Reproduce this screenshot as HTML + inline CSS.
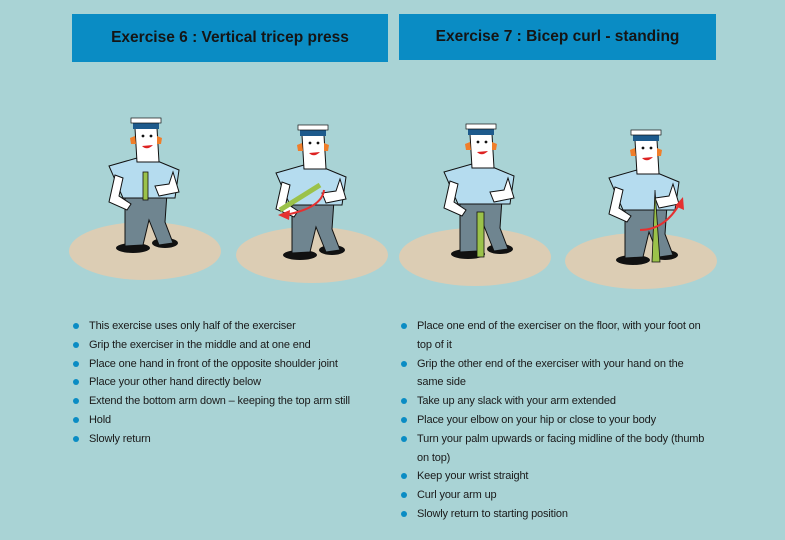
<!DOCTYPE html>
<html><head><style>
body{margin:0;width:785px;height:540px;background:#a9d3d5;position:relative;overflow:hidden;font-family:"Liberation Sans",sans-serif}
.h{position:absolute;background:#0a8cc4;color:#151515;font-weight:bold;font-size:15.5px;text-align:center;box-sizing:border-box}
ul{position:absolute;margin:0;padding:0;list-style:none;font-size:11px;color:#1a1a1a;letter-spacing:-0.15px}
li{position:relative;padding-left:16px;line-height:18.8px}
li:before{content:"";position:absolute;left:0;top:6px;width:6px;height:6px;border-radius:50%;background:#0a8cc4}
</style></head><body>
<div class="h" style="left:72px;top:14px;width:316px;height:48px;line-height:48px">Exercise 6 : Vertical tricep press</div>
<div class="h" style="left:399px;top:14px;width:317px;height:46px;line-height:46px">Exercise 7 : Bicep curl - standing</div>
<svg width="785" height="540" style="position:absolute;left:0;top:0">
<g fill="#dccdb4"><ellipse cx="145" cy="251" rx="76" ry="29"/><ellipse cx="312" cy="255" rx="76" ry="28"/><ellipse cx="475" cy="257" rx="76" ry="29"/><ellipse cx="641" cy="261" rx="76" ry="28"/></g>
<defs><g id="f">
<ellipse cx="-12" cy="118" rx="17" ry="5" fill="#111"/><ellipse cx="20" cy="113" rx="13" ry="5" fill="#111"/>
<path d="M-20 63 L22 63 L20 92 L28 113 L14 115 L4 90 L-2 115 L-20 116 Z" fill="#6f8590" stroke="#111"/>
<path d="M-36 36 L-8 28 L10 30 L34 40 L30 68 L-22 68 Z" fill="#b5dcef" stroke="#111"/>
<path d="M-30 45 L-36 72 L-18 80 L-14 74 L-26 66 L-22 48 Z" fill="#fff" stroke="#111"/>
<path d="M28 42 L34 62 L14 66 L10 56 L24 54 Z" fill="#fff" stroke="#111"/>
<path d="M-10 -2 L12 -2 L14 32 L-8 32 Z" fill="#fff" stroke="#111"/>
<path d="M-10 6 L-15 8 L-14 14 L-9 14 Z M12 6 L17 8 L16 14 L12 14Z" fill="#f07e2a"/>
<rect x="-12" y="-8" width="26" height="7" fill="#1d5a8c"/><rect x="-14" y="-12" width="30" height="5" fill="#fff" stroke="#111" stroke-width=".7"/>
<circle cx="-2" cy="6" r="1.4" fill="#111"/><circle cx="6" cy="6" r="1.4" fill="#111"/><path d="M-3 16 Q2 21 8 15Z" fill="#d22"/>
</g></defs>
<use href="#f" x="145" y="130"/><use href="#f" x="312" y="137"/><use href="#f" x="480" y="136"/><use href="#f" x="645" y="142"/>
<g stroke="#111" stroke-width=".8">
<rect x="143" y="172" width="5" height="28" fill="#9bc24a"/>
<path d="M280 210 L320 185" stroke="#9bc24a" stroke-width="5"/>
<rect x="477" y="212" width="7" height="45" fill="#9bc24a"/>
<path d="M655 190 L660 262 L652 262 Z" fill="#9bc24a"/>
</g>
<path d="M324 190 Q322 208 285 215" stroke="#e53030" stroke-width="2" fill="none"/><path d="M278 215 L290 210 L289 220Z" fill="#e53030"/>
<path d="M640 230 Q665 230 680 203" stroke="#e53030" stroke-width="2" fill="none"/><path d="M683 197 L684 210 L675 206Z" fill="#e53030"/>
</svg>
<ul style="left:73px;top:317px">
<li>This exercise uses only half of the exerciser</li>
<li>Grip the exerciser in the middle and at one end</li>
<li>Place one hand in front of the opposite shoulder joint</li>
<li>Place your other hand directly below</li>
<li>Extend the bottom arm down – keeping the top arm still</li>
<li>Hold</li>
<li>Slowly return</li>
</ul>
<ul style="left:401px;top:317px;width:305px">
<li>Place one end of the exerciser on the floor, with your foot on top of it</li>
<li>Grip the other end of the exerciser with your hand on the same side</li>
<li>Take up any slack with your arm extended</li>
<li>Place your elbow on your hip or close to your body</li>
<li>Turn your palm upwards or facing midline of the body (thumb on top)</li>
<li>Keep your wrist straight</li>
<li>Curl your arm up</li>
<li>Slowly return to starting position</li>
</ul>
</body></html>
